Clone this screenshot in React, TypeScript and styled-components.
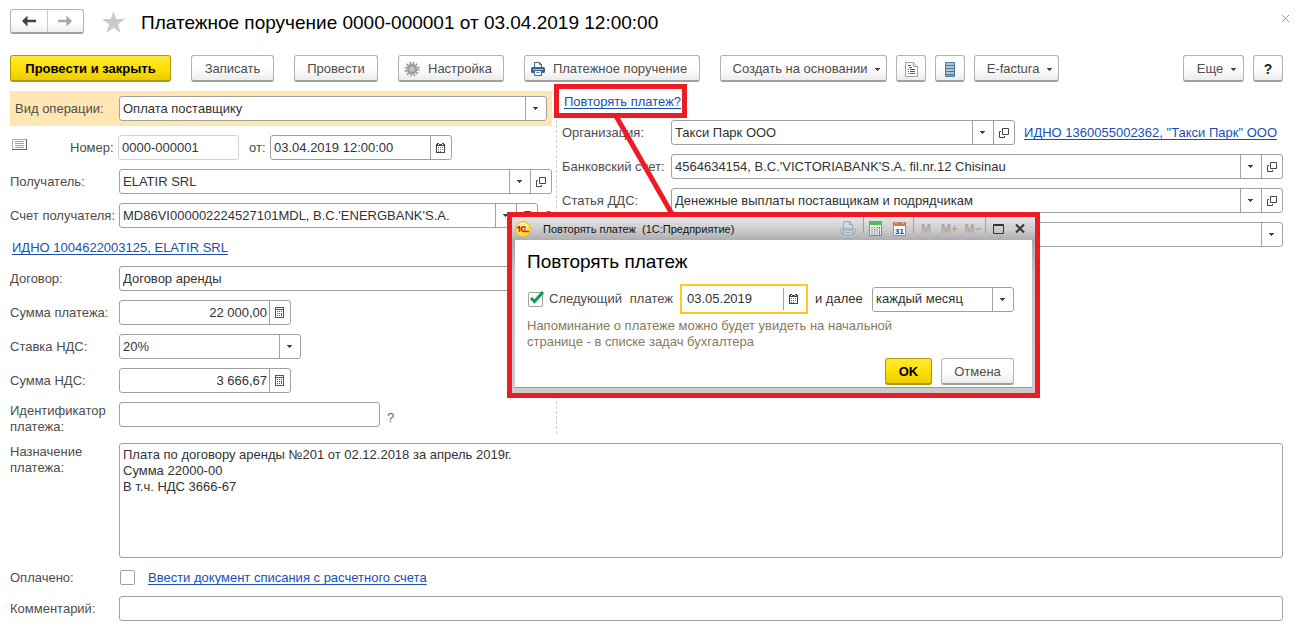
import React from "react";
import styled, { createGlobalStyle, css } from "styled-components";

const red = "#ed1c24";
const line = "#a0a0a0";
const labelColor = "#4d4d4d";

const GlobalStyle = createGlobalStyle`
  * { box-sizing: border-box; }
  body { margin: 0; background: #fff; }
  body, button, input, select, textarea {
    font-family: "Liberation Sans", Arial, sans-serif;
    font-size: 13px;
    line-height: 16px;
    color: #333;
  }
  svg { display: block; flex: none; }
`;

const Page = styled.main`
  padding: 9px 13px 15px 10px;
`;

const Header = styled.header`
  display: flex;
  align-items: flex-start;
  height: 26px;
`;

const NavGroup = styled.nav`
  display: flex;
  width: 74px;
  height: 25px;
  border: 1px solid #b3b3b3;
  border-bottom: 2px solid ${line};
  border-radius: 3px;
  background: linear-gradient(#fff 50%, #efefef);
`;

const NavButton = styled.button`
  flex: 1;
  display: flex;
  align-items: center;
  justify-content: center;
  padding: 0;
  border: 0;
  background: none;
  & + & { border-left: 1px solid #c8c8c8; }
`;

const StarButton = styled.button`
  margin: 2px 16px 0 18px;
  padding: 0;
  border: 0;
  background: none;
`;

const Title = styled.h1`
  margin: 2px 0 0;
  flex: 1;
  font-size: 19px;
  line-height: 24px;
  font-weight: 400;
  color: #000;
`;

const CloseButton = styled.button`
  margin: 5px -7px 0 0;
  padding: 0;
  border: 0;
  background: none;
`;

const Toolbar = styled.div`
  display: flex;
  gap: 20px;
  margin-top: 20px;
`;

const ToolGroup = styled.div<{ $end?: boolean }>`
  display: flex;
  gap: 9px;
  margin-left: ${(p) => (p.$end ? "auto" : "0")};
`;

const Button = styled.button<{ $w: number; $primary?: boolean; $menu?: boolean; $icon?: boolean }>`
  display: flex;
  align-items: center;
  justify-content: center;
  gap: 8px;
  width: ${(p) => p.$w}px;
  height: 27px;
  padding: 2px ${(p) => (p.$icon ? 6 : 0)}px 0 ${(p) => (p.$menu ? 6 : 0)}px;
  border: 1px solid #b3b3b3;
  border-bottom: 2px solid ${line};
  border-radius: 3px;
  background: linear-gradient(#fff 50%, #ececec);
  color: ${labelColor};
  white-space: nowrap;
  ${(p) =>
    p.$primary &&
    css`
      border-color: #a89a0c;
      background: linear-gradient(#ffe93a, #ffe000 50%, #e9cd00);
      color: #000;
      font-weight: 700;
    `}
`;

const Help = styled.span`
  font-size: 14px;
  font-weight: 700;
  color: #222;
`;

const Columns = styled.div`
  display: grid;
  grid-template-columns: minmax(0, 542fr) minmax(0, 721fr);
  column-gap: 10px;
  margin-top: 9px;
`;

const Column = styled.div`
  display: flex;
  flex-direction: column;
  gap: 9px;
`;

const RightColumn = styled(Column)`
  position: relative;
`;

const Divider = styled.div`
  position: absolute;
  left: -6px;
  top: 29px;
  bottom: 1px;
  border-left: 1px dashed #ccc;
`;

const Row = styled.div<{ $top?: boolean }>`
  display: flex;
  align-items: ${(p) => (p.$top ? "flex-start" : "center")};
  min-height: 25px;
`;

const Band = styled(Row)`
  height: 35px;
  padding: 0 5px;
  background: #ffe6b3;
`;

const NumberRow = styled(Row)`
  padding-left: 2px;
`;

const Label = styled.label<{ $w?: number }>`
  flex: none;
  width: ${(p) => p.$w ?? 109}px;
  color: ${labelColor};
  white-space: nowrap;
`;

const WrapLabel = styled(Label)`
  padding-top: 1px;
  white-space: pre-line;
`;

const NumberLabel = styled(Label)`
  margin-left: 43px;
`;

const FromLabel = styled(Label)`
  margin-left: 10px;
`;

const Field = styled.div<{ $w?: number; $faint?: boolean }>`
  display: flex;
  ${(p) => (p.$w ? `flex: none; width: ${p.$w}px;` : "flex: 1; min-width: 0;")}
  height: 25px;
  border: 1px solid ${(p) => (p.$faint ? "#d4d4d4" : line)};
  border-radius: 3px;
  background: #fff;
`;

const Input = styled.input<{ $right?: boolean }>`
  flex: 1;
  min-width: 0;
  width: 100%;
  padding: 0 2px 0 3px;
  border: 0;
  outline: 0;
  background: none;
  text-align: ${(p) => (p.$right ? "right" : "left")};
`;

const Picker = styled.div`
  flex: 1;
  min-width: 0;
  display: grid;
  align-items: stretch;
`;

const Select = styled.select`
  grid-area: 1 / 1;
  width: 100%;
  min-width: 0;
  padding: 0 24px 0 3px;
  border: 0;
  outline: 0;
  appearance: none;
  background: none;
`;

const Cell = styled.span`
  grid-area: 1 / 1;
  justify-self: end;
  display: flex;
  align-items: center;
  justify-content: center;
  width: 21px;
  padding-right: 1px;
  border-left: 1px solid ${line};
  pointer-events: none;
`;

const CellButton = styled.button`
  display: flex;
  align-items: center;
  justify-content: center;
  flex: none;
  width: 21px;
  padding: 0 1px 0 0;
  border: 0;
  border-left: 1px solid ${line};
  background: none;
`;

const Link = styled.a`
  color: #1a4fb3;
  white-space: nowrap;
  text-decoration: underline;
  text-decoration-skip-ink: none;
  text-underline-offset: 2px;
`;

const LinkRow = styled.div`
  display: flex;
  align-items: center;
  height: 20px;
  padding: 2px 0 0 2px;
`;

const OrgLink = styled(Link)`
  flex: none;
  margin: 0 6px 0 9px;
`;

const Hint = styled.a<{ $low?: boolean }>`
  margin-left: 7px;
  padding-top: ${(p) => (p.$low ? 8 : 0)}px;
  color: #0f75bd;
  text-decoration: none;
`;

const Tail = styled.section`
  display: flex;
  flex-direction: column;
  margin-top: 8px;
`;

const TextArea = styled.textarea`
  flex: 1;
  min-width: 0;
  height: 115px;
  padding: 3px;
  border: 1px solid ${line};
  border-radius: 3px;
  outline: 0;
  resize: none;
`;

const PaidRow = styled(Row)`
  margin: 7px 0 6px;
`;

const CheckWrap = styled.span`
  display: grid;
  flex: none;
  width: 15px;
  height: 15px;
  margin-left: 1px;
  > * { grid-area: 1 / 1; }
  svg { pointer-events: none; }
`;

const Check = styled.input`
  appearance: none;
  width: 15px;
  height: 15px;
  margin: 0;
  border: 1px solid ${line};
  border-radius: 2px;
  background: #fff;
`;

const PaidLink = styled(Link)`
  margin-left: 13px;
`;

/* The link that opens the reminder, with its callout and the window over the form */
const RepeatAnchor = styled.div`
  position: relative;
  align-self: flex-start;
  display: flex;
  align-items: center;
  height: 20px;
  padding: 2px 0 0 2px;
`;

const Callout = styled.div`
  position: absolute;
  inset: -7px -6px -7px -8px;
  border: 5px solid ${red};
  pointer-events: none;
`;

const Pointer = styled.svg`
  position: absolute;
  left: 50px;
  top: 25px;
  z-index: 1;
  pointer-events: none;
`;

const Dialog = styled.section`
  position: absolute;
  z-index: 2;
  left: -55px;
  top: 121px;
  width: 533px;
  border: 5px solid ${red};
  background: linear-gradient(#e4e4e4, #a9aaad 23px, #c4c6c8 60px, #c9cccc);
  padding: 0 3px 5px;
`;

const TitleBar = styled.div`
  display: flex;
  align-items: center;
  height: 23px;
  margin: 0 -3px;
  padding: 0 5px 0 3px;
  background: linear-gradient(#e6e6e6, #c9c9cb 60%, #acadb0);
`;

const WindowTitle = styled.span`
  flex: 1;
  margin-left: 12px;
  font-size: 11px;
  color: #111;
  white-space: pre;
`;

const WindowButton = styled.button<{ $w: number }>`
  display: flex;
  align-items: center;
  justify-content: center;
  width: ${(p) => p.$w}px;
  padding: 0;
  border: 0;
  background: none;
  font-size: 12px;
  font-weight: 700;
  color: #b3a499;
`;

const Separator = styled.i`
  align-self: flex-start;
  width: 1px;
  height: 16px;
  background: #a2a2a2;
`;

const DialogBody = styled.div`
  height: 148px;
  padding: 10px 18px 4px 12px;
  border-bottom: 1px solid #999;
  background: #fff;
`;

const DialogHeading = styled.h2`
  margin: 0;
  font-size: 19px;
  line-height: 24px;
  font-weight: 400;
  color: #000;
`;

const RepeatRow = styled.div`
  display: flex;
  align-items: center;
  height: 30px;
  margin-top: 10px;
`;

const NextLabel = styled.label`
  display: flex;
  justify-content: space-between;
  width: 124px;
  margin: 0 7px 0 6px;
  color: ${labelColor};
`;

const DateField = styled(Field)`
  height: 30px;
  padding: 2px;
  border: 2px solid #ffc91f;
  border-radius: 0;
`;

const ThenLabel = styled.label`
  flex: 1;
  margin-left: 7px;
  white-space: nowrap;
`;

const Note = styled.p`
  margin: 4px 0 0;
  width: 390px;
  color: #857a60;
`;

const Actions = styled.div`
  display: flex;
  justify-content: flex-end;
  gap: 9px;
  margin-top: 8px;
`;

const Caret = () => (
  <svg width="5" height="3" viewBox="0 0 5 3" shapeRendering="crispEdges">
    <path d="M0 0h5v1h-1v1h-1v1h-1v-1h-1v-1h-1z" fill="#444" />
  </svg>
);

const OpenIcon = () => (
  <svg width="10" height="10" viewBox="0 0 10 10" fill="none" stroke="#444">
    <path d="M3.500.5h6v6h-6zM2 3.500H.500v6h5V8" />
  </svg>
);

const CalendarIcon = () => (
  <svg width="9" height="10" viewBox="0 0 9 10" shapeRendering="crispEdges">
    <path d="M0 1h1V0h2v1h3V0h2v1h1v9H0z" fill="#444" />
    <path d="M1 3h7v6H1zM2 1h1v1H2zM6 1h1v1H6z" fill="#fff" />
    <path d="M2 4h1v1H2zM4 4h1v1H4zM6 4h1v1H6zM2 6h1v1H2zM4 6h1v1H4zM6 6h1v1H6zM2 8h1v1H2zM4 8h1v1H4z" fill="#777" />
  </svg>
);

const CalculatorIcon = () => (
  <svg width="9" height="11" viewBox="0 0 9 11" shapeRendering="crispEdges">
    <path d="M0 0h9v11H0z" fill="#555" />
    <path d="M1 1h7v1H1zM1 3h7v7H1z" fill="#fff" />
    <path d="M2 4h1v1H2zM4 4h1v1H4zM6 4h1v1H6zM2 6h1v1H2zM4 6h1v1H4zM6 6h1v3H6zM2 8h1v1H2zM4 8h1v1H4z" fill="#555" />
  </svg>
);

const ArrowIcon = ({ color, flip }: { color: string; flip?: boolean }) => (
  <svg width="14" height="12" viewBox="0 0 14 12" fill={color}>
    <path d={flip ? "M14 6 8.500.5V4.800H0v2.400h8.500v4.300z" : "M0 6 5.500.5V4.800H14v2.400H5.500v4.300z"} />
  </svg>
);

const GearIcon = () => (
  <svg width="16" height="16" viewBox="0 0 16 16">
    <circle cx="8" cy="8" r="6.400" fill="none" stroke="#9b9fa5" strokeWidth="2.400" strokeDasharray="1.600 1.750" />
    <circle cx="8" cy="8" r="4" fill="none" stroke="#9a9ea5" strokeWidth="2.800" />
    <circle cx="8" cy="8" r="2.300" fill="#f0f1f3" stroke="#7e8389" strokeWidth="0.700" />
    <circle cx="8" cy="8" r="0.900" fill="#8b8f96" />
  </svg>
);

const PrinterIcon = () => (
  <svg width="14" height="14" viewBox="0 0 14 14">
    <path d="M3.500 6V.5h5l2 2V6" fill="#fff" stroke="#3c6690" />
    <path d="M8.500.5v2h2" fill="none" stroke="#3c6690" />
    <rect x="0" y="5" width="14" height="6" rx="1.500" fill="#3c6690" />
    <path d="M2 7.500h10" stroke="#a9c3da" />
    <path d="M3.500 8.500h7v5h-7z" fill="#fff" stroke="#3c6690" />
    <path d="M5 10.500h4" stroke="#3c6690" strokeWidth=".7" />
  </svg>
);

const FaintPrinterIcon = () => (
  <svg width="16" height="15" viewBox="0 0 16 15" stroke="#9daab7">
    <path d="M3.500 8V.5h6l3 3V8" fill="#d3d8dc" />
    <path d="M9.500.5v3h3" fill="none" />
    <rect x=".5" y="7.500" width="15" height="5" rx="2" fill="#bcc5cd" />
    <path d="M3.500 9.500h9v4h-9z" fill="#d6dbdf" />
    <path d="M5 11.500h6" />
  </svg>
);

const ReportIcon = () => (
  <svg width="13" height="15" viewBox="0 0 13 15">
    <path d="M.5.5h8l4 4v10H.5z" fill="#fff" stroke="#8da6ba" />
    <path d="M8.500.5v4h4" fill="#dfe8ef" stroke="#8da6ba" />
    <path d="M3 3.500h3M4 5.500h3M3 7.500h1M5 7.500h5M5 9.500h5M3 9.500h1M3 11.500h1M5 11.500h5" stroke="#3f607c" />
  </svg>
);

const RegisterIcon = () => (
  <svg width="10" height="15" viewBox="0 0 10 15">
    <rect width="10" height="15" rx="1" fill="#52789a" />
    <path d="M1 2h8M1 5h8M1 8h8M1 11h8" stroke="#a9c6dd" strokeWidth="2" />
    <path d="M1 13.500h8" stroke="#7fa3c0" />
  </svg>
);

const ListIcon = () => (
  <svg width="15" height="17" viewBox="0 0 15 17">
    <path d="M.5.5h14v10H.5z" fill="#fff" stroke="#9fb4c8" />
    <path d="M14.500 0v11M0 10.500h15" stroke="#52677a" />
    <path d="M3 2.500h9M3 4.500h9M3 6.500h9M3 8.500h9" stroke="#8ca7c2" />
  </svg>
);

const LogoIcon = () => (
  <svg width="16" height="16" viewBox="0 0 16 16">
    <circle cx="8" cy="8" r="7.500" fill="#ffdf45" stroke="#e0bd35" />
    <ellipse cx="8" cy="5" rx="5.500" ry="3.500" fill="#fff3a0" />
    <path d="M2 7 4.500 5.500V11M10.800 7A2.300 2.300 0 1 0 9 10.400H14M10.500 8.600H9" fill="none" stroke="#dd1d14" strokeWidth="1.500" />
  </svg>
);

const GreenCalculator = () => (
  <svg width="13" height="15" viewBox="0 0 13 15">
    <path d="M.5.5h12v14H.5z" fill="#f6f6f6" stroke="#7d868c" />
    <path d="M0 0h13v4H0z" fill="#45c455" />
    <path d="M3 6v8M5.500 6v8M8 6v8" stroke="#7b858e" strokeWidth="1.400" strokeDasharray="1.300 .8" />
    <path d="M10.500 6v2" stroke="#d33" strokeWidth="1.200" />
    <path d="M10.500 9v5" stroke="#7b858e" strokeWidth="1.200" />
  </svg>
);

const DayIcon = () => (
  <svg width="13" height="15" viewBox="0 0 13 15">
    <path d="M.5 2.500h12v12H.5z" fill="#fff" stroke="#7f95a8" />
    <path d="M0 1h13v4H0z" fill="#c07f50" />
    <path d="M3 0v3M10 0v3" stroke="#e9d3c0" />
    <text x="6.500" y="13" textAnchor="middle" fontSize="8" fontFamily="Liberation Sans, sans-serif" fill="#333">31</text>
  </svg>
);

type ComboProps = { id: string; value: string; w?: number; open?: boolean; name?: string };

const Combo = ({ id, value, w, open, name }: ComboProps) => (
  <Field $w={w}>
    <Picker>
      <Select id={id} aria-label={name} defaultValue={value}>
        <option>{value}</option>
      </Select>
      <Cell><Caret /></Cell>
    </Picker>
    {open && <CellButton aria-label="Открыть"><OpenIcon /></CellButton>}
  </Field>
);

const Amount = ({ id, value }: { id: string; value: string }) => (
  <Field $w={172}>
    <Input id={id} $right defaultValue={value} />
    <CellButton aria-label="Калькулятор"><CalculatorIcon /></CellButton>
  </Field>
);

const RepeatDialog = () => (
  <Dialog role="dialog" aria-labelledby="repeat-title">
    <TitleBar>
      <LogoIcon />
      <WindowTitle>{"Повторять платеж  (1С:Предприятие)"}</WindowTitle>
      <WindowButton $w={30} aria-label="Печать"><FaintPrinterIcon /></WindowButton>
      <Separator />
      <WindowButton $w={22} aria-label="Калькулятор"><GreenCalculator /></WindowButton>
      <WindowButton $w={27} aria-label="Календарь"><DayIcon /></WindowButton>
      <Separator />
      <WindowButton $w={24}>M</WindowButton>
      <WindowButton $w={23}>M+</WindowButton>
      <WindowButton $w={24}>M−</WindowButton>
      <Separator />
      <WindowButton $w={24} aria-label="Развернуть">
        <svg width="11" height="10" viewBox="0 0 11 10" fill="none" stroke="#333">
          <path d="M.5.5h10v9H.5zM0 1.500h11" />
        </svg>
      </WindowButton>
      <WindowButton $w={20} aria-label="Закрыть">
        <svg width="10" height="9" viewBox="0 0 10 9" stroke="#333" strokeWidth="2">
          <path d="M1 .5 9 8.500M9 .5 1 8.500" />
        </svg>
      </WindowButton>
    </TitleBar>
    <DialogBody>
      <DialogHeading id="repeat-title">Повторять платеж</DialogHeading>
      <RepeatRow>
        <CheckWrap>
          <Check id="next" type="checkbox" defaultChecked />
          <svg width="15" height="15" viewBox="0 0 15 15" overflow="visible" fill="none" stroke="#0f9d50" strokeWidth="3">
            <path d="M3 6 6.500 9.500 15 0" />
          </svg>
        </CheckWrap>
        <NextLabel htmlFor="next"><span>Следующий</span><span>платеж</span></NextLabel>
        <DateField $w={128}>
          <Input aria-label="Дата" defaultValue="03.05.2019" />
          <CellButton aria-label="Выбрать дату"><CalendarIcon /></CellButton>
        </DateField>
        <ThenLabel htmlFor="period">и далее</ThenLabel>
        <Combo id="period" value="каждый месяц" w={142} />
      </RepeatRow>
      <Note>Напоминание о платеже можно будет увидеть на начальной странице - в списке задач бухгалтера</Note>
      <Actions>
        <Button $w={47} $primary>OK</Button>
        <Button $w={73}>Отмена</Button>
      </Actions>
    </DialogBody>
  </Dialog>
);

export default function App() {
  return (
    <Page>
      <GlobalStyle />
      <Header>
        <NavGroup>
          <NavButton aria-label="Назад"><ArrowIcon color="#404040" /></NavButton>
          <NavButton aria-label="Вперед"><ArrowIcon color="#a6a6a6" flip /></NavButton>
        </NavGroup>
        <StarButton aria-label="Избранное">
          <svg width="23" height="22" viewBox="0 0 23 22" fill="#c8cacc">
            <path d="M11.500 0 14.300 8H23l-7 5.200L18.600 22l-7.100-5.300L4.400 22 7 13.200 0 8h8.700z" />
          </svg>
        </StarButton>
        <Title>Платежное поручение 0000-000001 от 03.04.2019 12:00:00</Title>
        <CloseButton aria-label="Закрыть">
          <svg width="9" height="9" viewBox="0 0 9 9" stroke="#999"><path d="M1 1l7 7M8 1 1 8" /></svg>
        </CloseButton>
      </Header>

      <Toolbar>
        <Button $w={161} $primary>Провести и закрыть</Button>
        <Button $w={83}>Записать</Button>
        <Button $w={84}>Провести</Button>
        <Button $w={106} $icon><GearIcon />Настройка</Button>
        <Button $w={176} $icon><PrinterIcon />Платежное поручение</Button>
        <ToolGroup>
          <Button $w={167} $menu>Создать на основании<Caret /></Button>
          <Button $w={30} aria-label="Отчет"><ReportIcon /></Button>
          <Button $w={30} aria-label="Реестр"><RegisterIcon /></Button>
          <Button $w={85} $menu>E-factura<Caret /></Button>
        </ToolGroup>
        <ToolGroup $end>
          <Button $w={61} $menu>Еще<Caret /></Button>
          <Button $w={30}><Help>?</Help></Button>
        </ToolGroup>
      </Toolbar>

      <Columns>
        <Column>
          <Band>
            <Label $w={104} htmlFor="operation">Вид операции:</Label>
            <Combo id="operation" value="Оплата поставщику" />
          </Band>
          <NumberRow>
            <ListIcon />
            <NumberLabel $w={48} htmlFor="number">Номер:</NumberLabel>
            <Field $w={121} $faint><Input id="number" defaultValue="0000-000001" /></Field>
            <FromLabel $w={21} htmlFor="date">от:</FromLabel>
            <Field $w={182}>
              <Input id="date" defaultValue="03.04.2019 12:00:00" />
              <CellButton aria-label="Выбрать дату"><CalendarIcon /></CellButton>
            </Field>
          </NumberRow>
          <Row>
            <Label htmlFor="payee">Получатель:</Label>
            <Combo id="payee" value="ELATIR SRL" open />
          </Row>
          <Row>
            <Label htmlFor="account">Счет получателя:</Label>
            <Combo id="account" value="MD86VI000002224527101MDL, B.C.'ENERGBANK'S.A." open />
            <Hint href="#">?</Hint>
          </Row>
          <LinkRow><Link href="#">ИДНО 1004622003125, ELATIR SRL</Link></LinkRow>
          <Row>
            <Label htmlFor="contract">Договор:</Label>
            <Combo id="contract" value="Договор аренды" open />
          </Row>
          <Row>
            <Label htmlFor="sum">Сумма платежа:</Label>
            <Amount id="sum" value="22 000,00" />
          </Row>
          <Row>
            <Label htmlFor="rate">Ставка НДС:</Label>
            <Combo id="rate" value="20%" w={182} />
          </Row>
          <Row>
            <Label htmlFor="vat">Сумма НДС:</Label>
            <Amount id="vat" value="3 666,67" />
          </Row>
          <Row $top>
            <WrapLabel htmlFor="ident">{"Идентификатор\nплатежа:"}</WrapLabel>
            <Field $w={261}><Input id="ident" /></Field>
            <Hint $low href="#">?</Hint>
          </Row>
        </Column>

        <RightColumn>
          <Divider />
          <RepeatAnchor>
            <Link href="#">Повторять платеж?</Link>
            <Callout />
            <Pointer width="72" height="104" viewBox="0 0 72 104" stroke={red} strokeWidth="5">
              <path d="M4 0 60 98" />
            </Pointer>
            <RepeatDialog />
          </RepeatAnchor>
          <Row>
            <Label htmlFor="org">Организация:</Label>
            <Combo id="org" value="Такси Парк ООО" open />
            <OrgLink href="#">ИДНО 1360055002362, "Такси Парк" ООО</OrgLink>
          </Row>
          <Row>
            <Label htmlFor="bank">Банковский счет:</Label>
            <Combo id="bank" value="4564634154, B.C.'VICTORIABANK'S.A. fil.nr.12 Chisinau" open />
          </Row>
          <Row>
            <Label htmlFor="flow">Статья ДДС:</Label>
            <Combo id="flow" value="Денежные выплаты поставщикам и подрядчикам" open />
          </Row>
          <Row>
            <Label as="span" />
            <Combo id="extra" value="" name="Дополнительно" />
          </Row>
        </RightColumn>
      </Columns>

      <Tail>
        <Row $top>
          <WrapLabel htmlFor="purpose">{"Назначение\nплатежа:"}</WrapLabel>
          <TextArea
            id="purpose"
            defaultValue={"Плата по договору аренды №201 от 02.12.2018 за апрель 2019г.\nСумма 22000-00\nВ т.ч. НДС 3666-67"}
          />
        </Row>
        <PaidRow>
          <Label htmlFor="paid">Оплачено:</Label>
          <CheckWrap><Check id="paid" type="checkbox" /></CheckWrap>
          <PaidLink href="#">Ввести документ списания с расчетного счета</PaidLink>
        </PaidRow>
        <Row>
          <Label htmlFor="comment">Комментарий:</Label>
          <Field><Input id="comment" /></Field>
        </Row>
      </Tail>
    </Page>
  );
}
